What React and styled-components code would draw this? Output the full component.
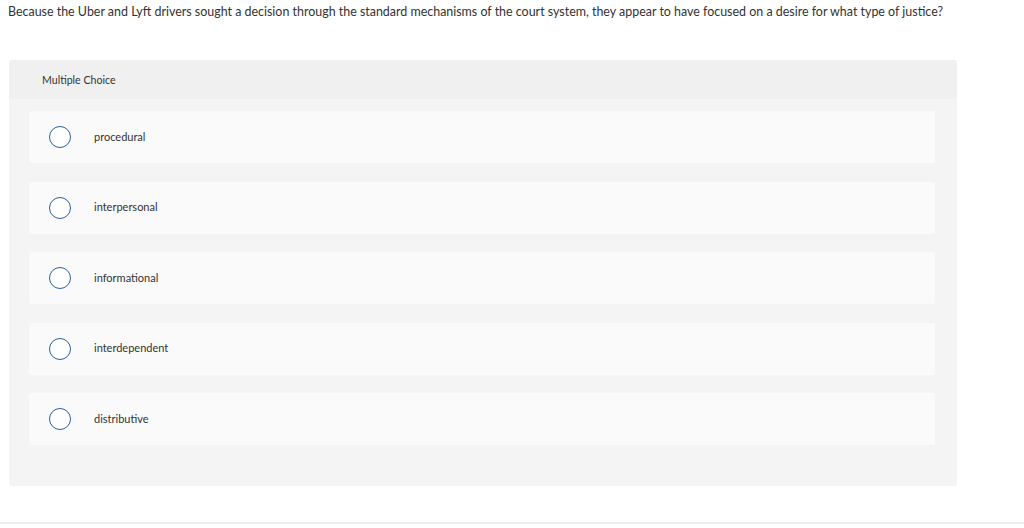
import React from "react";
import styled, { createGlobalStyle } from "styled-components";

const GlobalStyle = createGlobalStyle`
  html, body {
    margin: 0;
    padding: 0;
    background: #fff;
  }
  body {
    font-family: Lato, "Open Sans", "Liberation Sans", sans-serif;
    color: #333;
  }
`;

const options = [
  "procedural",
  "interpersonal",
  "informational",
  "interdependent",
  "distributive",
];

const App = () => {
  return (
    <Page>
      <GlobalStyle />
      <Question>
        Because the Uber and Lyft drivers sought a decision through the standard
        mechanisms of the court system, they appear to have focused on a desire
        for what type of justice?
      </Question>
      <Panel>
        <PanelHeader>Multiple Choice</PanelHeader>
        <Choices>
          {options.map((opt) => (
            <Choice key={opt}>
              <Radio />
              <Label>{opt}</Label>
            </Choice>
          ))}
        </Choices>
      </Panel>
      <Footer />
    </Page>
  );
};

export default App;

const Page = styled.div`
  width: 1024px;
  height: 528px;
  display: flex;
  flex-direction: column;
  overflow: hidden;
`;

const Question = styled.p`
  margin: 0;
  padding: 4px 0 0 8px;
  height: 60px;
  flex-shrink: 0;
  box-sizing: border-box;
  font-size: 12.45px;
  line-height: 15px;
  color: #333;
  white-space: nowrap;
`;

const Panel = styled.div`
  margin-left: 9px;
  width: 948px;
  height: 426px;
  flex-shrink: 0;
  background: #f4f4f4;
  border-radius: 3px;
  display: flex;
  flex-direction: column;
`;

const PanelHeader = styled.div`
  height: 39px;
  background: #f0f0f0;
  border-radius: 3px 3px 0 0;
  display: flex;
  align-items: center;
  padding-left: 33px;
  font-size: 10.6px;
  color: #333;
`;

const Choices = styled.div`
  display: flex;
  flex-direction: column;
  gap: 18.5px;
  padding: 12px 22px 0 20px;
`;

const Choice = styled.div`
  height: 52px;
  background: #fafafa;
  border-radius: 2px;
  display: flex;
  align-items: center;
  padding-left: 20px;
`;

const Radio = styled.span`
  width: 20px;
  height: 20px;
  border: 1px solid #2c5f9e;
  border-radius: 50%;
  background: #fff;
  flex-shrink: 0;
`;

const Label = styled.span`
  margin: 0 0 2px 23px;
  font-size: 11px;
  color: #333;
`;

const Footer = styled.div`
  margin-top: 36px;
  height: 2px;
  flex-shrink: 0;
  background: #eeeeee;
`;
